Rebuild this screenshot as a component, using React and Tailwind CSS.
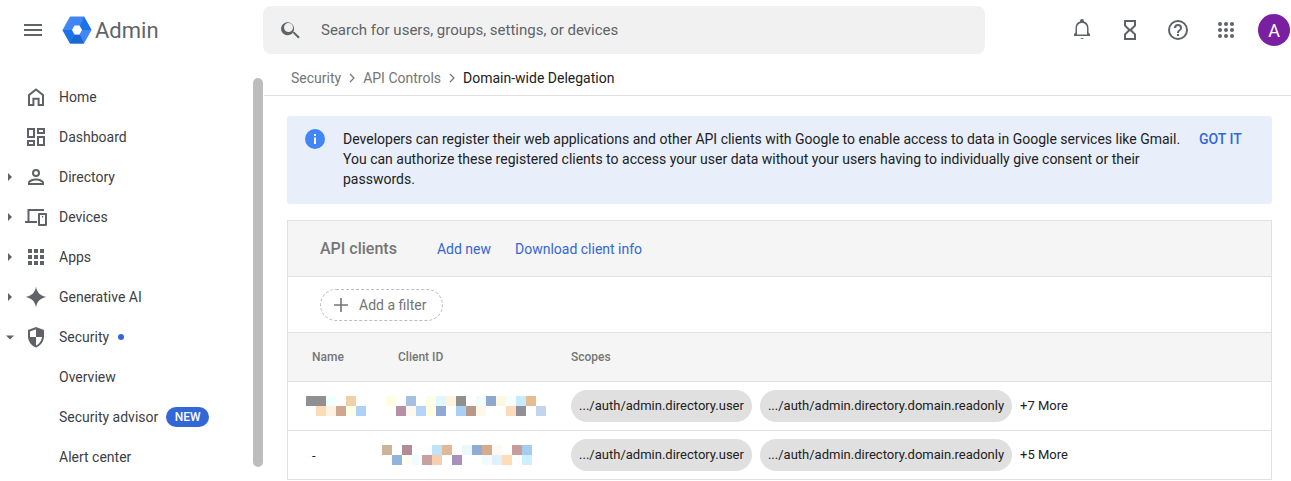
import React from "react";

const I = ({ children, size = 24, className = "" }) => (
  <svg width={size} height={size} viewBox="0 0 24 24" fill="#5f6368" className={className}>{children}</svg>
);

const Caret = ({ open }) => (
  <svg width="10" height="10" viewBox="0 0 10 10" fill="#5f6368" className="shrink-0">
    {open ? <path d="M1 3.5h8L5 7.5z" /> : <path d="M3 1l4 4-4 4z" />}
  </svg>
);

const icons = {
  home: <path d="M12 3.2 4 9.4V21h6.4v-6.2h3.2V21H20V9.4L12 3.2zm6 15.8h-2.4v-6.2H8.4V19H6v-8.6l6-4.7 6 4.7V19z" />,
  dash: <path d="M3 3h8v10H3V3zm2 2v6h4V5H5zm8-2h8v6h-8V3zm2 2v2h4V5h-4zm-2 6h8v10h-8V11zm2 2v6h4v-6h-4zM3 15h8v6H3v-6zm2 2v2h4v-2H5z" />,
  dir: <path d="M12 4a4 4 0 1 0 0 8 4 4 0 0 0 0-8zm0 2a2 2 0 1 1 0 4 2 2 0 0 1 0-4zm0 7.5c-3 0-8 1.4-8 4.2V20h16v-2.3c0-2.8-5-4.2-8-4.2zM6 18v-.3c0-.8 3.4-2.2 6-2.2s6 1.4 6 2.2v.3H6z" />,
  dev: <path d="M4 4h16v2H5.5v10H13v2H1v-2h2.5V4zm11 4h7a1 1 0 0 1 1 1v11a1 1 0 0 1-1 1h-7a1 1 0 0 1-1-1V9a1 1 0 0 1 1-1zm1 2v9h5v-9h-5zm2 1h1.2v1.4H18V11z" />,
  apps: <path d="M4 4h4v4H4V4zm6 0h4v4h-4V4zm6 0h4v4h-4V4zM4 10h4v4H4v-4zm6 0h4v4h-4v-4zm6 0h4v4h-4v-4zM4 16h4v4H4v-4zm6 0h4v4h-4v-4zm6 0h4v4h-4v-4z" />,
  ai: <path d="M12 1.5c.9 6 4.5 9.6 10.5 10.5-6 .9-9.6 4.5-10.5 10.5C11.1 16.500 7.500 12.900 1.500 12 7.500 11.100 11.100 7.500 12 1.500z" />,
  sec: <path d="M12 2 4 5v6c0 5.200 3.400 10 8 11.500 4.600-1.500 8-6.300 8-11.500V5l-8-3zm0 10h6c-.5 3.900-3 7.300-6 8.400V12H6V6.400l6-2.200V12z" />,
};

const NavRow = ({ icon, caret, open, children }) => (
  <div className="flex items-center h-10">
    <div className="w-[24px] pl-[5px] flex items-center">{caret && <Caret open={open} />}</div>
    <div className="w-[35px] flex items-center">{icon && <I>{icons[icon]}</I>}</div>
    <div className="text-sm text-[#3c4043] flex items-center">{children}</div>
  </div>
);

const Pixels = ({ rows, className = "" }) => (
  <div className={`flex flex-col ${className}`}>
    {rows.map((row, i) => (
      <div key={i} className="flex h-[10px]">
        {row.map((c, j) => (
          <div key={j} className={`w-[10px] h-[10px] ${c}`} />
        ))}
      </div>
    ))}
  </div>
);

const n1 = [
  ["bg-[#909090]", "bg-[#909090]", "bg-[#f0ffff]", "", "bg-[#f0d0a8]"],
  ["", "bg-[#fadcb8]", "bg-[#fdf3e0]", "bg-[#cda78f]", "bg-[#ffffe8]", "bg-[#aed2f5]"],
];
const c1 = [
  ["bg-[#ffffe0]", "", "bg-[#a5c0e2]", "", "bg-[#ffffe8]", "bg-[#e0f8ff]", "bg-[#fff4e0]", "bg-[#909090]", "", "bg-[#f0fcff]", "bg-[#90a8d0]", "bg-[#fff8e0]", "bg-[#f8ffff]", "bg-[#c8ecff]", "bg-[#e6bd90]"],
  ["", "bg-[#b890a4]", "bg-[#fff8ec]", "bg-[#b4d4fa]", "bg-[#ffffe0]", "bg-[#90a8d4]", "", "bg-[#a8d0f4]", "bg-[#b89888]", "bg-[#fff8e8]", "", "", "bg-[#fadcbc]", "bg-[#909098]", "", "bg-[#c4d4ea]"],
];
const c2 = [
  ["bg-[#ccb498]", "", "bg-[#b08c98]", "", "bg-[#fcfeff]", "bg-[#c0e2f8]", "bg-[#e0b898]", "", "bg-[#ecf8ff]", "bg-[#90acd4]", "bg-[#d4ac8c]", "bg-[#fef9f2]", "", "bg-[#c89c98]", "bg-[#a4ccf0]"],
  ["", "bg-[#90b4dc]", "bg-[#fffff0]", "bg-[#f0fcff]", "bg-[#c8a0a0]", "bg-[#f4d0b0]", "", "bg-[#a890b8]", "", "", "bg-[#f0fcff]", "bg-[#e0f0ff]", "bg-[#fedcb8]", "", "bg-[#ccf0ff]"],
];

const Chip = ({ children, className = "" }) => (
  <span className={`h-8 rounded-2xl bg-[#e0e0e0] flex items-center justify-center text-[13px] text-[#212121] ${className}`}>{children}</span>
);

const Row = ({ name, client, more }) => (
  <div className="flex items-center h-[49px] border-b border-[#e0e0e0]">
    <div className="w-[100px] shrink-0 pl-[18px]">{name}</div>
    <div className="w-[183px] shrink-0 text-[13px]">{client}</div>
    <Chip className="w-[181px]">.../auth/admin.directory.user</Chip>
    <Chip className="w-[252px] ml-2">.../auth/admin.directory.domain.readonly</Chip>
    <span className="ml-2 text-[13px] text-[#212121]">{more}</span>
  </div>
);

export default function App() {
  return (
    <div className="w-[1291px] h-[481px] overflow-hidden bg-white flex flex-col font-['Roboto',sans-serif]">
      <header className="h-[60px] shrink-0 flex items-center">
        <div className="w-[263px] shrink-0 flex items-center">
          <svg width="24" height="24" viewBox="0 0 24 24" fill="#5f6368" className="ml-[21px]"><path d="M3 6h18v2H3zM3 11h18v2H3zM3 16h18v2H3z" /></svg>
          <svg width="32" height="30" viewBox="0 0 32 30" className="ml-[16px]">
            <path d="M9 1.500h14L30.500 15 23 28.500H9L1.500 15z" fill="#4285f4" />
            <path d="M23 1.500 30.500 15H21.500L19 11zM9 28.500 1.500 15H10.500L13 19z" fill="#1a73e8" />
            <path d="M9 28.500 13 20h6l4 8.500z" fill="#1a67d2" />
            <path d="M11 15l2.500-4.500h5L21 15l-2.500 4.500h-5z" fill="#fff" />
          </svg>
          <span className="ml-[2px] text-[22px] text-[#5f6368]">Admin</span>
        </div>
        <div className="w-[722px] h-12 rounded-lg bg-[#f1f1f1] flex items-center shrink-0">
          <svg width="24" height="24" viewBox="0 0 24 24" fill="#5f6368" className="ml-4"><path d="M15.500 14h-.8l-.3-.3A6.500 6.500 0 1 0 14 14.400l.3.3v.8l5 5 1.500-1.500-5.300-5zm-6 0a4.500 4.500 0 1 1 0-9 4.500 4.500 0 0 1 0 9z" /></svg>
          <span className="ml-[18px] text-[15px] text-[#5f6368]">Search for users, groups, settings, or devices</span>
        </div>
        <div className="flex-1 flex items-center">
          <I className="ml-[85px]"><path d="M12 22a2 2 0 0 0 1.700-1h-3.400A2 2 0 0 0 12 22zm6.500-6.500V11c0-3.100-1.700-5.700-4.500-6.400V4a2 2 0 1 0-4 0v.6C7.200 5.300 5.500 7.900 5.500 11v4.500L4 17v2h16v-2l-1.500-1.500zM17 17.500H7V11c0-2.800 2.200-5 5-5s5 2.200 5 5v6.500z" transform="translate(0 -1)" /></I>
          <I className="ml-6"><path d="M6 2h12v6l-4 4 4 4v6H6v-6l4-4-4-4V2zm2 2v3.200L12 11l4-3.800V4H8zm4 9-4 3.800V20h8v-3.200L12 13z" /></I>
          <I className="ml-6"><path d="M12 2a10 10 0 1 0 0 20 10 10 0 0 0 0-20zm0 18a8 8 0 1 1 0-16 8 8 0 0 1 0 16zm-1-4h2v2h-2v-2zm1-10a4 4 0 0 0-4 4h2a2 2 0 1 1 4 0c0 2-3 1.800-3 5h2c0-2.200 3-2.500 3-5a4 4 0 0 0-4-4z" /></I>
          <I className="ml-6"><circle cx="6" cy="6" r="2" /><circle cx="12" cy="6" r="2" /><circle cx="18" cy="6" r="2" /><circle cx="6" cy="12" r="2" /><circle cx="12" cy="12" r="2" /><circle cx="18" cy="12" r="2" /><circle cx="6" cy="18" r="2" /><circle cx="12" cy="18" r="2" /><circle cx="18" cy="18" r="2" /></I>
          <div className="ml-[20px] w-8 h-8 rounded-full bg-[#7b1fa2] text-white flex items-center justify-center text-[18px]">A</div>
        </div>
      </header>
      <div className="flex-1 flex min-h-0">
        <aside className="w-[264px] shrink-0 flex">
          <nav className="w-[253px] pt-[17px]">
            <NavRow icon="home">Home</NavRow>
            <NavRow icon="dash">Dashboard</NavRow>
            <NavRow icon="dir" caret>Directory</NavRow>
            <NavRow icon="dev" caret>Devices</NavRow>
            <NavRow icon="apps" caret>Apps</NavRow>
            <NavRow icon="ai" caret>Generative AI</NavRow>
            <NavRow icon="sec" caret open>Security<span className="ml-[9px] w-[6px] h-[6px] rounded-full bg-[#3367d6]" /></NavRow>
            <NavRow>Overview</NavRow>
            <NavRow>Security advisor<span className="ml-2 w-[43px] h-5 rounded-[10px] bg-[#3367d6] text-white text-xs font-medium flex items-center justify-center">NEW</span></NavRow>
            <NavRow>Alert center</NavRow>
          </nav>
          <div className="w-[10px] h-[389px] mt-[18px] rounded-[5px] bg-[#bdbdbd]" />
        </aside>
        <main className="flex-1 min-w-0">
          <div className="h-9 border-b border-[#e0e0e0] flex items-center pl-[27px] text-sm text-[#757575]">
            <span>Security</span>
            <svg width="8" height="10" viewBox="0 0 8 10" fill="none" stroke="#757575" strokeWidth="1.200" className="mx-[7px]"><path d="M2 1l4 4-4 4" /></svg>
            <span>API Controls</span>
            <svg width="8" height="10" viewBox="0 0 8 10" fill="none" stroke="#757575" strokeWidth="1.200" className="mx-[7px]"><path d="M2 1l4 4-4 4" /></svg>
            <span className="text-[#212121]">Domain-wide Delegation</span>
          </div>
          <div className="pl-[23px] pr-[19px] pt-5">
            <div className="h-[88px] rounded-[3px] bg-[#e8effb] flex px-[18px] pt-[13px]">
              <svg width="20" height="20" viewBox="0 0 20 20" className="shrink-0"><circle cx="10" cy="10" r="10" fill="#4285f4" /><path d="M9 8.500h2V15H9zM9 5h2v2H9z" fill="#fff" /></svg>
              <div className="ml-[18px] w-[850px] text-sm leading-5 text-[#212121] shrink-0">Developers can register their web applications and other API clients with Google to enable access to data in Google services like Gmail. You can authorize these registered clients to access your user data without your users having to individually give consent or their passwords.</div>
              <span className="ml-[6px] text-sm font-medium leading-5 text-[#3367d6] whitespace-nowrap">GOT IT</span>
            </div>
            <div className="mt-4 border-x border-t border-[#e0e0e0]">
              <div className="h-14 bg-[#f5f5f5] border-b border-[#e0e0e0] flex items-center pl-8">
                <span className="text-base font-medium text-[#757575]">API clients</span>
                <span className="ml-10 text-sm text-[#3367d6]">Add new</span>
                <span className="ml-6 text-sm text-[#3367d6]">Download client info</span>
              </div>
              <div className="h-14 border-b border-[#e0e0e0] flex items-center pl-8">
                <div className="w-[123px] h-8 rounded-2xl border border-dashed border-[#bdbdbd] flex items-center pl-[12px]">
                  <svg width="16" height="16" viewBox="0 0 16 16" fill="#757575"><path d="M7.200 1h1.600v6.200H15v1.600H8.800V15H7.200V8.800H1V7.200h6.200z" /></svg>
                  <span className="ml-[10px] text-sm text-[#757575]">Add a filter</span>
                </div>
              </div>
              <div className="h-[49px] bg-[#f5f5f5] border-b border-[#e0e0e0] flex items-center text-xs font-medium text-[#757575]">
                <span className="w-[110px] pl-6 shrink-0">Name</span>
                <span className="w-[173px] shrink-0">Client ID</span>
                <span>Scopes</span>
              </div>
              <Row name={<Pixels rows={n1} />} client={<Pixels rows={c1} className="ml-[-2px]" />} more="+7 More" />
              <Row name={<span className="text-[13px] text-[#212121] pl-[6px]">-</span>} client={<Pixels rows={c2} className="ml-[-6px]" />} more="+5 More" />
            </div>
          </div>
        </main>
      </div>
    </div>
  );
}
